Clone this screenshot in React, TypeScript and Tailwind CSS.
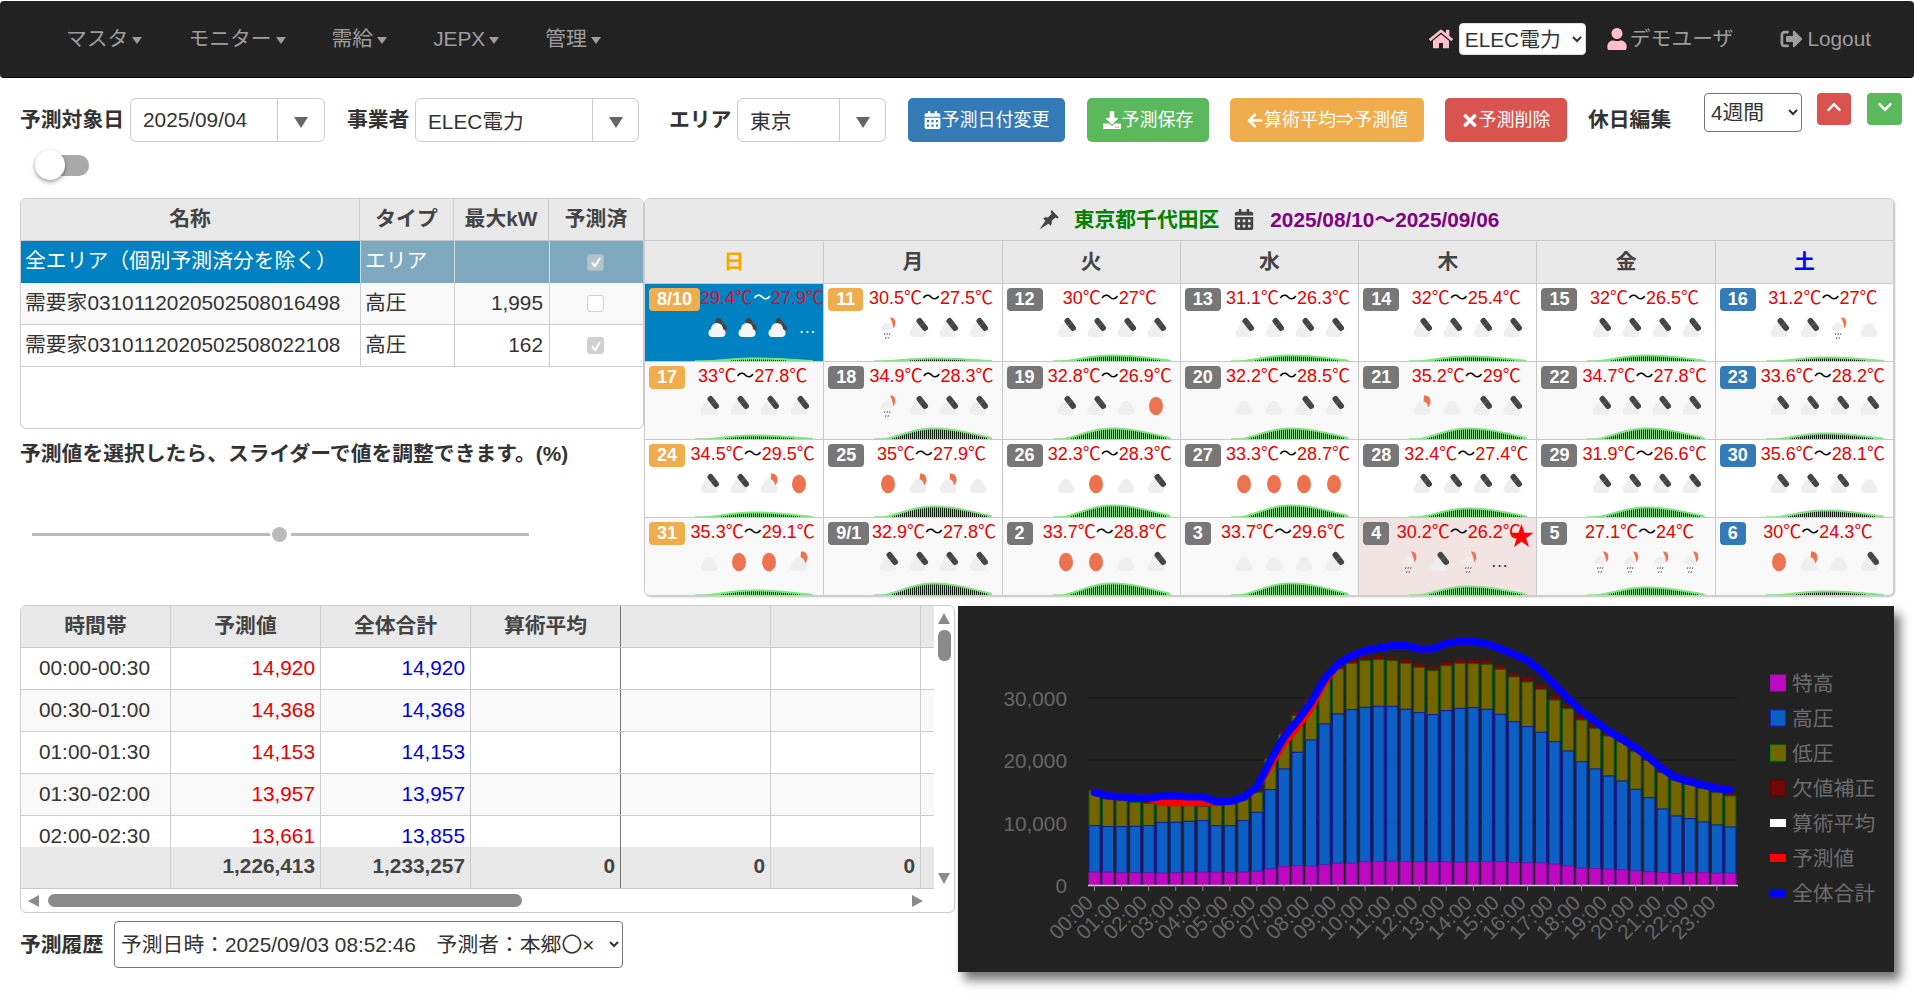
import React from "react";
import { FaCalendarAlt, FaDownload, FaArrowLeft, FaTimes, FaChevronUp, FaChevronDown, FaHome, FaUser, FaSignOutAlt } from "react-icons/fa";

const sp = [38,38,36,36,36,35,36,38,38,38,37,38,41,48,55,57,56,60,65,65,69,70,71,70,69,69,69,68,69,70,70,67,66,66,62,57,50,49,47,45,42,39,37,34,37,37,35,35];
const hv = [178,175,175,176,178,188,188,191,193,178,178,193,218,286,348,398,435,483,513,526,533,536,536,527,517,511,523,530,532,527,512,490,475,458,430,402,370,348,327,312,287,262,228,207,199,189,180,174];
const lv = [283,258,253,248,245,241,238,238,236,238,243,255,278,378,451,508,548,610,648,665,673,676,673,665,653,643,658,665,664,662,647,624,609,587,555,529,495,470,447,430,400,374,337,314,302,289,277,267];
const tot = [278,268,265,261,260,267,267,265,265,250,251,263,293,373,443,493,548,618,663,688,703,711,718,718,708,709,725,730,730,724,709,692,674,642,602,560,522,492,462,437,412,382,347,322,310,300,290,284];
const base = 884;
const bx = (i: number) => 1094.5 + i * 13.53;
const by = (h: number) => base - h / 3;

function linePath(v: number[]) {
  return v.map((h, i) => `${i ? "L" : "M"}${bx(i).toFixed(1)} ${by(h).toFixed(1)}`).join(" ");
}
const pred = tot.map((h, i) => {
  if (i >= 5 && i <= 9) return 247;
  if (i === 13) return 358;
  if (i === 14) return 426;
  if (i === 15) return 474;
  if (i === 16) return 530;
  if (i === 17) return 608;
  return h;
});

function Seg({ x, y0, y1, fill, stroke }: { x: number; y0: number; y1: number; fill: string; stroke: string }) {
  return <rect x={x - 5.5} y={y1} width={11} height={Math.max(0, y0 - y1)} fill={fill} stroke={stroke} strokeWidth={1} />;
}

function Chart() {
  const legend: [string, string, string, boolean][] = [
    ["特高", "#c008c0", "#a010c0", false],
    ["高圧", "#0c60c4", "#1020d0", false],
    ["低圧", "#746500", "#108010", false],
    ["欠値補正", "#700808", "#600000", false],
    ["算術平均", "#ffffff", "#ffffff", true],
    ["予測値", "#ff0000", "#ff0000", true],
    ["全体合計", "#0000ff", "#0000ff", true],
  ];
  return (
    <svg viewBox="958 605 936 366" width={936} height={366} className="block">
      {[697, 759, 822].map((y) => (
        <line key={y} x1={1088} x2={1737} y1={y} y2={y} stroke="#151515" strokeWidth={1} />
      ))}
      {[["30,000", 705], ["20,000", 767], ["10,000", 830], ["0", 892]].map(([t, y]) => (
        <text key={t} x={1067} y={y} textAnchor="end" fontSize={20.8} fill="#666">{t}</text>
      ))}
      {sp.map((_, i) => {
        const x = bx(i);
        const extra = i >= 14 && i <= 38 ? 4 : 2;
        return (
          <g key={i}>
            <rect x={x - 5.5} y={by(lv[i]) - extra} width={11} height={extra} fill="#700808" />
            <Seg x={x} y0={by(hv[i])} y1={by(lv[i])} fill="#746500" stroke="#0c5c10" />
            <Seg x={x} y0={by(sp[i])} y1={by(hv[i])} fill="#0c60c4" stroke="#14189c" />
            <Seg x={x} y0={base} y1={by(sp[i])} fill="#c008c0" stroke="#8810b0" />
          </g>
        );
      })}
      <line x1={1088} x2={1738} y1={base + 0.5} y2={base + 0.5} stroke="#d8c8d8" strokeWidth={1.5} />
      {Array.from({ length: 24 }).map((_, i) => {
        const x = bx(i * 2);
        const hh = String(i).padStart(2, "0");
        return (
          <g key={i}>
            <line x1={x} x2={x} y1={base} y2={base + 6} stroke="#888" strokeWidth={1} />
            <text x={x} y={903} textAnchor="end" fontSize={20.8} fill="#666" transform={`rotate(-45 ${x} 903)`}>{hh}:00</text>
          </g>
        );
      })}
      <path d={linePath(pred)} fill="none" stroke="#ff0000" strokeWidth={7} strokeLinejoin="round" strokeLinecap="round" />
      <path d={linePath(tot)} fill="none" stroke="#0000ff" strokeWidth={7.5} strokeLinejoin="round" strokeLinecap="round" />
      {legend.map(([t, f, s, line], i) => {
        const y = 682 + i * 35;
        return (
          <g key={t}>
            {line ? (
              <rect x={1770} y={y - 4} width={16} height={8} fill={f} />
            ) : (
              <rect x={1770.5} y={y - 8} width={15} height={16} fill={f} stroke={s} strokeWidth={1} />
            )}
            <text x={1792} y={y + 7.5} fontSize={20.8} fill="#6c6c6c">{t}</text>
          </g>
        );
      })}
    </svg>
  );
}

type Ic = "c" | "d" | "o" | "s" | "r";

function Cloud({ fill }: { fill: string }) {
  return (
    <g fill={fill}>
      <circle cx={6.5} cy={20} r={4} />
      <circle cx={11} cy={16} r={6} />
      <circle cx={15.5} cy={20} r={4} />
      <rect x={6} y={18} width={10} height={6} />
    </g>
  );
}

function Weather({ k, sel }: { k: Ic; sel: boolean }) {
  const cloud = sel ? "#f6f6f6" : "#efefef";
  const capsule = (
    <g>
      <line x1={12.5} y1={8} x2={18} y2={15} stroke="#454545" strokeWidth={6} strokeLinecap="round" />
      <line x1={13} y1={13} x2={17.5} y2={9.5} stroke="#707070" strokeWidth={0.7} />
    </g>
  );
  return (
    <svg width={30} height={28} viewBox="0 0 30 28" className="block shrink-0">
      {k === "o" && <ellipse cx={11} cy={15} rx={7} ry={9.2} fill="#ec7350" />}
      {k === "s" && <path d="M13 4.500c4-.8 7 2.600 6.500 6.800-.2 2.200-1 3.700-2.300 5.200H12z" fill="#ec7350" />}
      {k === "d" && sel && capsule}
      {(k === "c" || k === "d" || k === "s") && <Cloud fill={cloud} />}
      {k === "d" && !sel && capsule}
      {k === "r" && (
        <g>
          <path d="M13 4.500c3.400-.7 5.800 2.400 5.300 6.200-.2 2-1 3.400-2 4.600-.3-3.400-1.400-7-3.300-10.800z" fill="#ec7350" />
          <path d="M5 17c-2-1-1.200-4 .8-4.200C6.800 9.500 11 8 13.500 11c2 .4 3 3.600 1 6z" fill={cloud} />
          <path d="M8 20l-.6 2M10.500 20l-.6 2M13 20l-.6 2M9 24l-.6 2M11.500 24l-.6 2" stroke="#666" strokeWidth={0.9} />
        </g>
      )}
    </svg>
  );
}

function Sun({ h }: { h: number }) {
  const cx = 109;
  const w = 118;
  const pts: string[] = [];
  let bars = "";
  const f = (x: number) => {
    const t = x / w;
    const skew = x < 0 ? 1.15 : 0.85;
    const c = Math.cos(Math.PI * Math.min(0.5, Math.abs(t) * skew));
    return h * Math.pow(c, 1.4);
  };
  const H = h + 2;
  for (let x = -w / 2; x <= w / 2 + 0.1; x += 4) {
    pts.push(`${(cx + x).toFixed(1)},${(H - f(x)).toFixed(1)}`);
  }
  for (let x = -w / 2 + 10; x <= w / 2 - 6; x += 2) {
    const y = f(x) - 1.5;
    if (y > 0.5) bars += `M${Math.round(cx + x) + 0.5} ${H}V${(H - y).toFixed(1)}`;
  }
  return (
    <svg width={178} height={H} viewBox={`0 0 178 ${H}`} className="mt-auto block">
      <polygon points={`${cx - w / 2},${H} ${pts.join(" ")} ${cx + w / 2},${H}`} fill="#84e084" stroke="#84e084" strokeWidth={1} />
      <path d={bars} stroke="#0a1a0a" strokeWidth={1} fill="none" />
    </svg>
  );
}

type Cell = { d: string; hi: string; lo: string; ic: string; more?: boolean; h: number; c: "o" | "g" | "b"; sel?: boolean; star?: boolean };

const cells: Cell[] = [
  { d: "8/10", hi: "29.4", lo: "27.9", ic: "ddd", more: true, h: 3, c: "o", sel: true },
  { d: "11", hi: "30.5", lo: "27.5", ic: "rddd", h: 3, c: "o" },
  { d: "12", hi: "30", lo: "27", ic: "dddd", h: 6, c: "g" },
  { d: "13", hi: "31.1", lo: "26.3", ic: "dddd", h: 6, c: "g" },
  { d: "14", hi: "32", lo: "25.4", ic: "dddd", h: 5, c: "g" },
  { d: "15", hi: "32", lo: "26.5", ic: "dddd", h: 6, c: "g" },
  { d: "16", hi: "31.2", lo: "27", ic: "ddrc", h: 4, c: "b" },
  { d: "17", hi: "33", lo: "27.8", ic: "dddd", h: 4, c: "o" },
  { d: "18", hi: "34.9", lo: "28.3", ic: "rddd", h: 11, c: "g" },
  { d: "19", hi: "32.8", lo: "26.9", ic: "ddco", h: 11, c: "g" },
  { d: "20", hi: "32.2", lo: "28.5", ic: "ccdd", h: 11, c: "g" },
  { d: "21", hi: "35.2", lo: "29", ic: "scdd", h: 11, c: "g" },
  { d: "22", hi: "34.7", lo: "27.8", ic: "dddd", h: 11, c: "g" },
  { d: "23", hi: "33.6", lo: "28.2", ic: "dddd", h: 6, c: "b" },
  { d: "24", hi: "34.5", lo: "29.5", ic: "ddso", h: 5, c: "o" },
  { d: "25", hi: "35", lo: "27.9", ic: "ossc", h: 11, c: "g" },
  { d: "26", hi: "32.3", lo: "28.3", ic: "cocd", h: 12, c: "g" },
  { d: "27", hi: "33.3", lo: "28.7", ic: "oooo", h: 12, c: "g" },
  { d: "28", hi: "32.4", lo: "27.4", ic: "dddd", h: 9, c: "g" },
  { d: "29", hi: "31.9", lo: "26.6", ic: "dddd", h: 10, c: "g" },
  { d: "30", hi: "35.6", lo: "28.1", ic: "dddc", h: 7, c: "b" },
  { d: "31", hi: "35.3", lo: "29.1", ic: "coos", h: 5, c: "o" },
  { d: "9/1", hi: "32.9", lo: "27.8", ic: "dddd", h: 12, c: "g" },
  { d: "2", hi: "33.7", lo: "28.8", ic: "oocd", h: 12, c: "g" },
  { d: "3", hi: "33.7", lo: "29.6", ic: "cccd", h: 12, c: "g" },
  { d: "4", hi: "30.2", lo: "26.2", ic: "rdr", more: true, h: 9, c: "g", star: true },
  { d: "5", hi: "27.1", lo: "24", ic: "rrrr", h: 8, c: "g" },
  { d: "6", hi: "30", lo: "24.3", ic: "oscd", h: 4, c: "b" },
];

function Day({ cell, idx }: { cell: Cell; idx: number }) {
  const row = Math.floor(idx / 7);
  const badge = cell.c === "o" ? "bg-[#f0ad4e]" : cell.c === "b" ? "bg-[#337ab7]" : "bg-[#777777]";
  const bg = cell.sel ? "bg-[#0081c2]" : cell.star ? "bg-[#f3e4e4]" : row % 2 ? "bg-[#f9f9f9]" : "bg-white";
  const red = cell.sel ? "text-[#d0142a]" : "text-[#e80000]";
  return (
    <div className={`relative flex h-[78px] min-w-0 flex-col overflow-hidden border-t border-[#c8c8c8] ${idx % 7 ? "border-l" : ""} ${bg}`}>
      <div className="flex items-start pl-[4px] pt-[4px]">
        <span className={`flex h-[23px] shrink-0 items-center rounded-[4px] px-[8px] text-[18px] font-bold text-white ${badge}`}>{cell.d}</span>
        <span className={`min-w-0 flex-1 whitespace-nowrap text-center text-[18px] leading-[21px] ${cell.star ? "pr-[8px]" : "pr-[3px]"} ${cell.sel ? "text-white" : "text-black"}`}>
          <span className={red}>{cell.hi}℃</span>〜<span className={red}>{cell.lo}℃</span>
        </span>
      </div>
      <div className={`mt-[2px] flex items-center justify-end ${cell.star ? "pr-[26px]" : "pr-[5px]"}`}>
        {cell.ic.split("").map((k, i) => (
          <Weather key={i} k={k as Ic} sel={!!cell.sel} />
        ))}
        {cell.more && <span className={`w-[22px] text-center text-[18px] leading-[20px] ${cell.sel ? "text-white" : "text-[#333]"}`}>…</span>}
      </div>
      <Sun h={cell.h} />
      {cell.star && <span className="absolute right-[2px] top-[2px] text-[26px] leading-[32px] text-[#ff0000]">★</span>}
    </div>
  );
}

function Combo({ w, sep, value, low }: { w: string; sep: string; value: string; low?: boolean }) {
  return (
    <div className={`flex h-[44px] shrink-0 rounded-[6px] border border-[#cccccc] bg-white ${w}`}>
      <div className={`flex flex-1 items-center pl-[12px] text-[20.8px] text-[#333] ${low ? "pt-[3px]" : ""}`}>{value}</div>
      <div className={`flex items-center justify-center border-l border-[#cccccc] pt-[4px] ${sep}`}>
        <span className="h-0 w-0 border-x-[7px] border-t-[11px] border-x-transparent border-t-[#666666]" />
      </div>
    </div>
  );
}

function Btn({ cls, ml, w, icon, text }: { cls: string; ml: string; w: string; icon: React.ReactNode; text: string }) {
  return (
    <div className={`flex h-[44px] shrink-0 items-center justify-center rounded-[5px] text-[18px] text-white ${cls} ${ml} ${w}`}>
      {icon}
      <span>{text}</span>
    </div>
  );
}

function NavItem({ t }: { t: string }) {
  return (
    <div className="flex items-center text-[#9d9d9d]">
      <span>{t}</span>
      <span className="ml-[4px] mt-[2px] h-0 w-0 border-x-[5.5px] border-t-[7px] border-x-transparent border-t-[#9d9d9d]" />
    </div>
  );
}

function Check({ on, dark }: { on: boolean; dark?: boolean }) {
  return (
    <span className={`flex h-[17px] w-[17px] items-center justify-center rounded-[3px] border ${on ? (dark ? "border-[#a9b9c2] bg-[#b5c3ca]" : "border-[#cfcfcf] bg-[#d0d0d0]") : "border-[#cfcfcf] bg-white"}`}>
      {on && (
        <svg width="12" height="12" viewBox="0 0 12 12">
          <path d="M2 6.500 L5 10 L10 2" fill="none" stroke="#ffffff" strokeWidth={2} />
        </svg>
      )}
    </span>
  );
}

const tRows = [
  ["00:00-00:30", "14,920", "14,920"],
  ["00:30-01:00", "14,368", "14,368"],
  ["01:00-01:30", "14,153", "14,153"],
  ["01:30-02:00", "13,957", "13,957"],
  ["02:00-02:30", "13,661", "13,855"],
];

const cust: [string, string, boolean][] = [
  ["需要家0310112020502508016498", "1,995", false],
  ["需要家0310112020502508022108", "162", true],
];

const gridCols = "grid grid-cols-[150px_150px_150px_150px_150px_150px_13px]";
const topCols = "grid grid-cols-[339px_94px_95px_1fr]";

export default function App() {
  return (
    <div className="h-[998px] w-[1914px] overflow-hidden bg-white font-['Liberation_Sans','Noto_Sans_CJK_JP',sans-serif] text-[20.8px] text-[#333333]">
      {/* navbar */}
      <nav className="mt-[1px] flex h-[77px] items-center justify-between rounded-[4px] border-b border-black bg-[#222222]">
        <div className="flex items-center gap-[46px] pl-[66px]">
          <NavItem t="マスタ" />
          <NavItem t="モニター" />
          <NavItem t="需給" />
          <NavItem t="JEPX" />
          <NavItem t="管理" />
        </div>
        <div className="flex items-center pr-[43px] text-[#9d9d9d]">
          <FaHome className="h-[22px] w-[24px] text-[#ffc0cb]" />
          <select defaultValue="e" className="ml-[6px] h-[32px] w-[127px] rounded-[4px] border border-[#dddddd] bg-white pl-[1px] text-[#333]">
            <option value="e">ELEC電力</option>
          </select>
          <FaUser className="ml-[20px] h-[22px] w-[22px] text-[#ffc0cb]" />
          <span className="ml-[2px]">デモユーザ</span>
          <FaSignOutAlt className="ml-[47px] h-[22px] w-[23px] text-[#9d9d9d]" />
          <span className="ml-[4px]">Logout</span>
        </div>
      </nav>

      {/* toolbar */}
      <div className="mt-[20px] flex items-start pl-[20px]">
        <label className="mt-[6px] w-[110px] shrink-0 font-bold">予測対象日</label>
        <Combo w="w-[195px]" sep="w-[47px]" value="2025/09/04" />
        <label className="ml-[22px] mt-[6px] w-[68px] shrink-0 font-bold">事業者</label>
        <Combo w="w-[224px]" sep="w-[46px]" value="ELEC電力" low />
        <label className="ml-[30px] mt-[6px] w-[68px] shrink-0 font-bold">エリア</label>
        <Combo w="w-[149px]" sep="w-[46px]" value="東京" low />
        <Btn cls="bg-[#337ab7]" ml="ml-[22px]" w="w-[157px]" icon={<FaCalendarAlt className="mr-[1px] h-[18px] w-[17px]" />} text="予測日付変更" />
        <Btn cls="bg-[#5cb85c]" ml="ml-[22px]" w="w-[122px]" icon={<FaDownload className="mr-[1px] h-[18px] w-[18px]" />} text="予測保存" />
        <Btn cls="bg-[#f0ad4e]" ml="ml-[21px]" w="w-[194px]" icon={<FaArrowLeft className="h-[17px] w-[18px]" />} text="算術平均⇒予測値" />
        <Btn cls="bg-[#d9534f]" ml="ml-[21px]" w="w-[122px]" icon={<FaTimes className="mr-[1px] h-[19px] w-[16px]" />} text="予測削除" />
        <label className="ml-[21px] mt-[6px] w-[84px] shrink-0 font-bold">休日編集</label>
        <select defaultValue="4" className="ml-[32px] -mt-[5px] h-[39px] w-[98px] shrink-0 rounded-[4px] border border-[#767676] bg-white pl-[2px] text-[#333]">
          <option value="4">4週間</option>
        </select>
        <div className="ml-[15px] -mt-[5px] flex h-[32px] w-[34px] shrink-0 items-center justify-center rounded-[4px] bg-[#d9534f] pb-[4px] text-white">
          <FaChevronUp className="h-[16px] w-[16px]" />
        </div>
        <div className="ml-[16px] -mt-[5px] flex h-[32px] w-[35px] shrink-0 items-center justify-center rounded-[4px] bg-[#5cb85c] pb-[4px] text-white">
          <FaChevronDown className="h-[16px] w-[16px]" />
        </div>
      </div>

      {/* toggle */}
      <div className="ml-[35px] mt-[8px] flex h-[30px] w-[54px] items-center">
        <div className="z-10 h-[30px] w-[30px] rounded-full bg-white shadow-[0_2px_4px_rgba(0,0,0,0.4)]" />
        <div className="-ml-[15px] h-[21px] w-[39px] rounded-r-[10px] bg-[#aaaaaa]" />
      </div>

      {/* main */}
      <div className="mt-[18px] flex items-start pl-[20px]">
        <div className="w-[624px] shrink-0">
          <div className="h-[231px] overflow-hidden rounded-[6px] border border-[#cccccc] bg-white">
            <div className={`${topCols} h-[42px] items-center border-b border-[#c8c8c8] bg-[#e9e9e9] text-center font-bold text-[#444]`}>
              <div className="flex h-full items-center justify-center border-r border-[#cccccc] pb-[2px]">名称</div>
              <div className="flex h-full items-center justify-center border-r border-[#cccccc] pb-[2px]">タイプ</div>
              <div className="flex h-full items-center justify-center border-r border-[#cccccc] pb-[2px]">最大kW</div>
              <div className="pb-[2px]">予測済</div>
            </div>
            <div className={`${topCols} h-[42px] text-white`}>
              <div className="flex items-center bg-[#0081c2] pb-[2px] pl-[4px]">全エリア（個別予測済分を除く）</div>
              <div className="flex items-center border-l border-[#cfdde5] bg-[#7fa9be] pb-[2px] pl-[4px]">エリア</div>
              <div className="border-l border-[#cfdde5] bg-[#7fa9be]" />
              <div className="flex items-center justify-center border-l border-[#cfdde5] bg-[#7fa9be] pr-[2px]"><Check on dark /></div>
            </div>
            {cust.map(([n, kw, on], i) => (
              <div key={n} className={`${topCols} h-[42px] border-b border-[#cccccc] ${i === 0 ? "bg-[#f9f9f9]" : "bg-white"}`}>
                <div className="flex items-center whitespace-nowrap pb-[2px] pl-[4px]">{n}</div>
                <div className="flex items-center border-l border-[#cccccc] pb-[2px] pl-[4px]">高圧</div>
                <div className="flex items-center justify-end border-l border-[#cccccc] pb-[2px] pr-[6px]">{kw}</div>
                <div className="flex items-center justify-center border-l border-[#cccccc] pr-[2px]"><Check on={on} /></div>
              </div>
            ))}
          </div>
          <div className="mt-[10px] font-bold leading-[30px]">予測値を選択したら、スライダーで値を調整できます。(%)</div>
          <div className="ml-[12px] mt-[58px] flex items-center">
            <div className="h-[3px] w-[238px] bg-[#bbbbbb]" />
            <div className="ml-[2px] h-[15px] w-[15px] rounded-full bg-[#bbbbbb]" />
            <div className="ml-[4px] h-[3px] w-[238px] bg-[#bbbbbb]" />
          </div>
        </div>

        <div className="w-[1250px] shrink-0 overflow-hidden rounded-[6px] border border-[#cccccc] bg-white shadow-[1px_1px_2px_rgba(0,0,0,0.25)]">
          <div className="flex h-[41px] items-center justify-center bg-[#e9e9e9] font-bold">
            <svg width="21" height="21" viewBox="0 0 20 20" fill="#444444" className="shrink-0">
              <path d="M12 1 L19 8 L17.5 9 L15.5 8 L12 11.500 C12.500 13.500 12 15 11 16 L4 9 C5 8 6.500 7.500 8.500 8 L12 4.500 L11 2.500 Z" />
              <path d="M6.500 10.500 L0.500 19.500 L9.500 13.500 Z" />
            </svg>
            <span className="ml-[14px] text-[#008000]">東京都千代田区</span>
            <FaCalendarAlt className="ml-[15px] h-[21px] w-[20px] text-[#444]" />
            <span className="ml-[16px] text-[#800080]">2025/08/10〜2025/09/06</span>
          </div>
          <div className="grid h-[43px] grid-cols-7 border-t border-[#c8c8c8] bg-[#e9e9e9] text-center font-bold text-[#444]">
            {["日", "月", "火", "水", "木", "金", "土"].map((d, i) => (
              <div key={d} className={`flex items-center justify-center ${i ? "border-l border-[#c8c8c8]" : ""} ${i === 0 ? "text-[#ffa500]" : i === 6 ? "text-[#0000ff]" : ""}`}>{d}</div>
            ))}
          </div>
          <div className="grid grid-cols-7">
            {cells.map((c, i) => (
              <Day key={c.d} cell={c} idx={i} />
            ))}
          </div>
        </div>
      </div>

      {/* bottom */}
      <div className="mt-[9px] flex items-start pl-[20px]">
        <div className="w-[935px] shrink-0">
          <div className="h-[308px] overflow-hidden rounded-[6px] border border-[#cccccc] bg-white">
            <div className="flex h-[283px]">
              <div className="flex w-[913px] shrink-0 flex-col overflow-hidden">
                <div className={`${gridCols} h-[42px] items-stretch border-b border-[#c8c8c8] bg-[#e9e9e9] font-bold text-[#444]`}>
                  {["時間帯", "予測値", "全体合計", "算術平均", "", "", ""].map((t, i) => (
                    <div key={i} className={`flex items-center justify-center pb-[2px] ${i === 3 ? "border-r border-[#777777]" : i < 6 ? "border-r border-[#cccccc]" : ""}`}>{t}</div>
                  ))}
                </div>
                <div className="h-[199px] overflow-hidden">
                  {tRows.map((r, i) => (
                    <div key={i} className={`${gridCols} h-[42px] border-b border-[#cccccc] ${i % 2 ? "bg-[#f9f9f9]" : "bg-white"}`}>
                      <div className="flex items-center justify-center border-r border-[#cccccc] pb-[2px] pr-[2px]">{r[0]}</div>
                      <div className="flex items-center justify-end border-r border-[#cccccc] pb-[2px] pr-[5px] text-[#e80000]">{r[1]}</div>
                      <div className="flex items-center justify-end border-r border-[#cccccc] pb-[2px] pr-[5px] text-[#0000e0]">{r[2]}</div>
                      <div className="border-r border-[#777777]" />
                      <div className="border-r border-[#cccccc]" />
                      <div className="border-r border-[#cccccc]" />
                      <div />
                    </div>
                  ))}
                </div>
                <div className={`${gridCols} h-[42px] border-b border-[#c8c8c8] bg-[#e9e9e9] font-bold text-[#444]`}>
                  <div className="border-r border-[#cccccc]" />
                  <div className="flex items-center justify-end border-r border-[#cccccc] pb-[3px] pr-[5px]">1,226,413</div>
                  <div className="flex items-center justify-end border-r border-[#cccccc] pb-[3px] pr-[5px]">1,233,257</div>
                  <div className="flex items-center justify-end border-r border-[#777777] pb-[3px] pr-[5px]">0</div>
                  <div className="flex items-center justify-end border-r border-[#cccccc] pb-[3px] pr-[5px]">0</div>
                  <div className="flex items-center justify-end border-r border-[#cccccc] pb-[3px] pr-[5px]">0</div>
                  <div />
                </div>
              </div>
              <div className="flex w-[21px] flex-col items-center pb-[5px] pt-[7px]">
                <span className="h-0 w-0 border-x-[6px] border-b-[11px] border-x-transparent border-b-[#8a8a8a]" />
                <div className="mt-[6px] h-[31px] w-[13px] rounded-[6px] bg-[#8a8a8a]" />
                <span className="mt-auto h-0 w-0 border-x-[6px] border-t-[11px] border-x-transparent border-t-[#8a8a8a]" />
              </div>
            </div>
            <div className="flex h-[23px] items-center pl-[7px] pr-[31px]">
              <span className="h-0 w-0 border-y-[6px] border-r-[11px] border-y-transparent border-r-[#8a8a8a]" />
              <div className="ml-[9px] h-[13px] w-[474px] rounded-[7px] bg-[#8a8a8a]" />
              <span className="ml-auto h-0 w-0 border-y-[6px] border-l-[11px] border-y-transparent border-l-[#8a8a8a]" />
            </div>
          </div>
          <div className="mt-[8px] flex items-center">
            <label className="w-[94px] shrink-0 font-bold">予測履歴</label>
            <select defaultValue="1" className="h-[47px] w-[509px] shrink-0 rounded-[4px] border border-[#767676] bg-white pl-[2px] text-[#333]">
              <option value="1">予測日時：2025/09/03 08:52:46　予測者：本郷〇×</option>
            </select>
          </div>
        </div>
        <div className="ml-[3px] mt-[1px] w-[936px] shrink-0 bg-[#222222] shadow-[6px_8px_10px_rgba(0,0,0,0.55)]">
          <Chart />
        </div>
      </div>
    </div>
  );
}
